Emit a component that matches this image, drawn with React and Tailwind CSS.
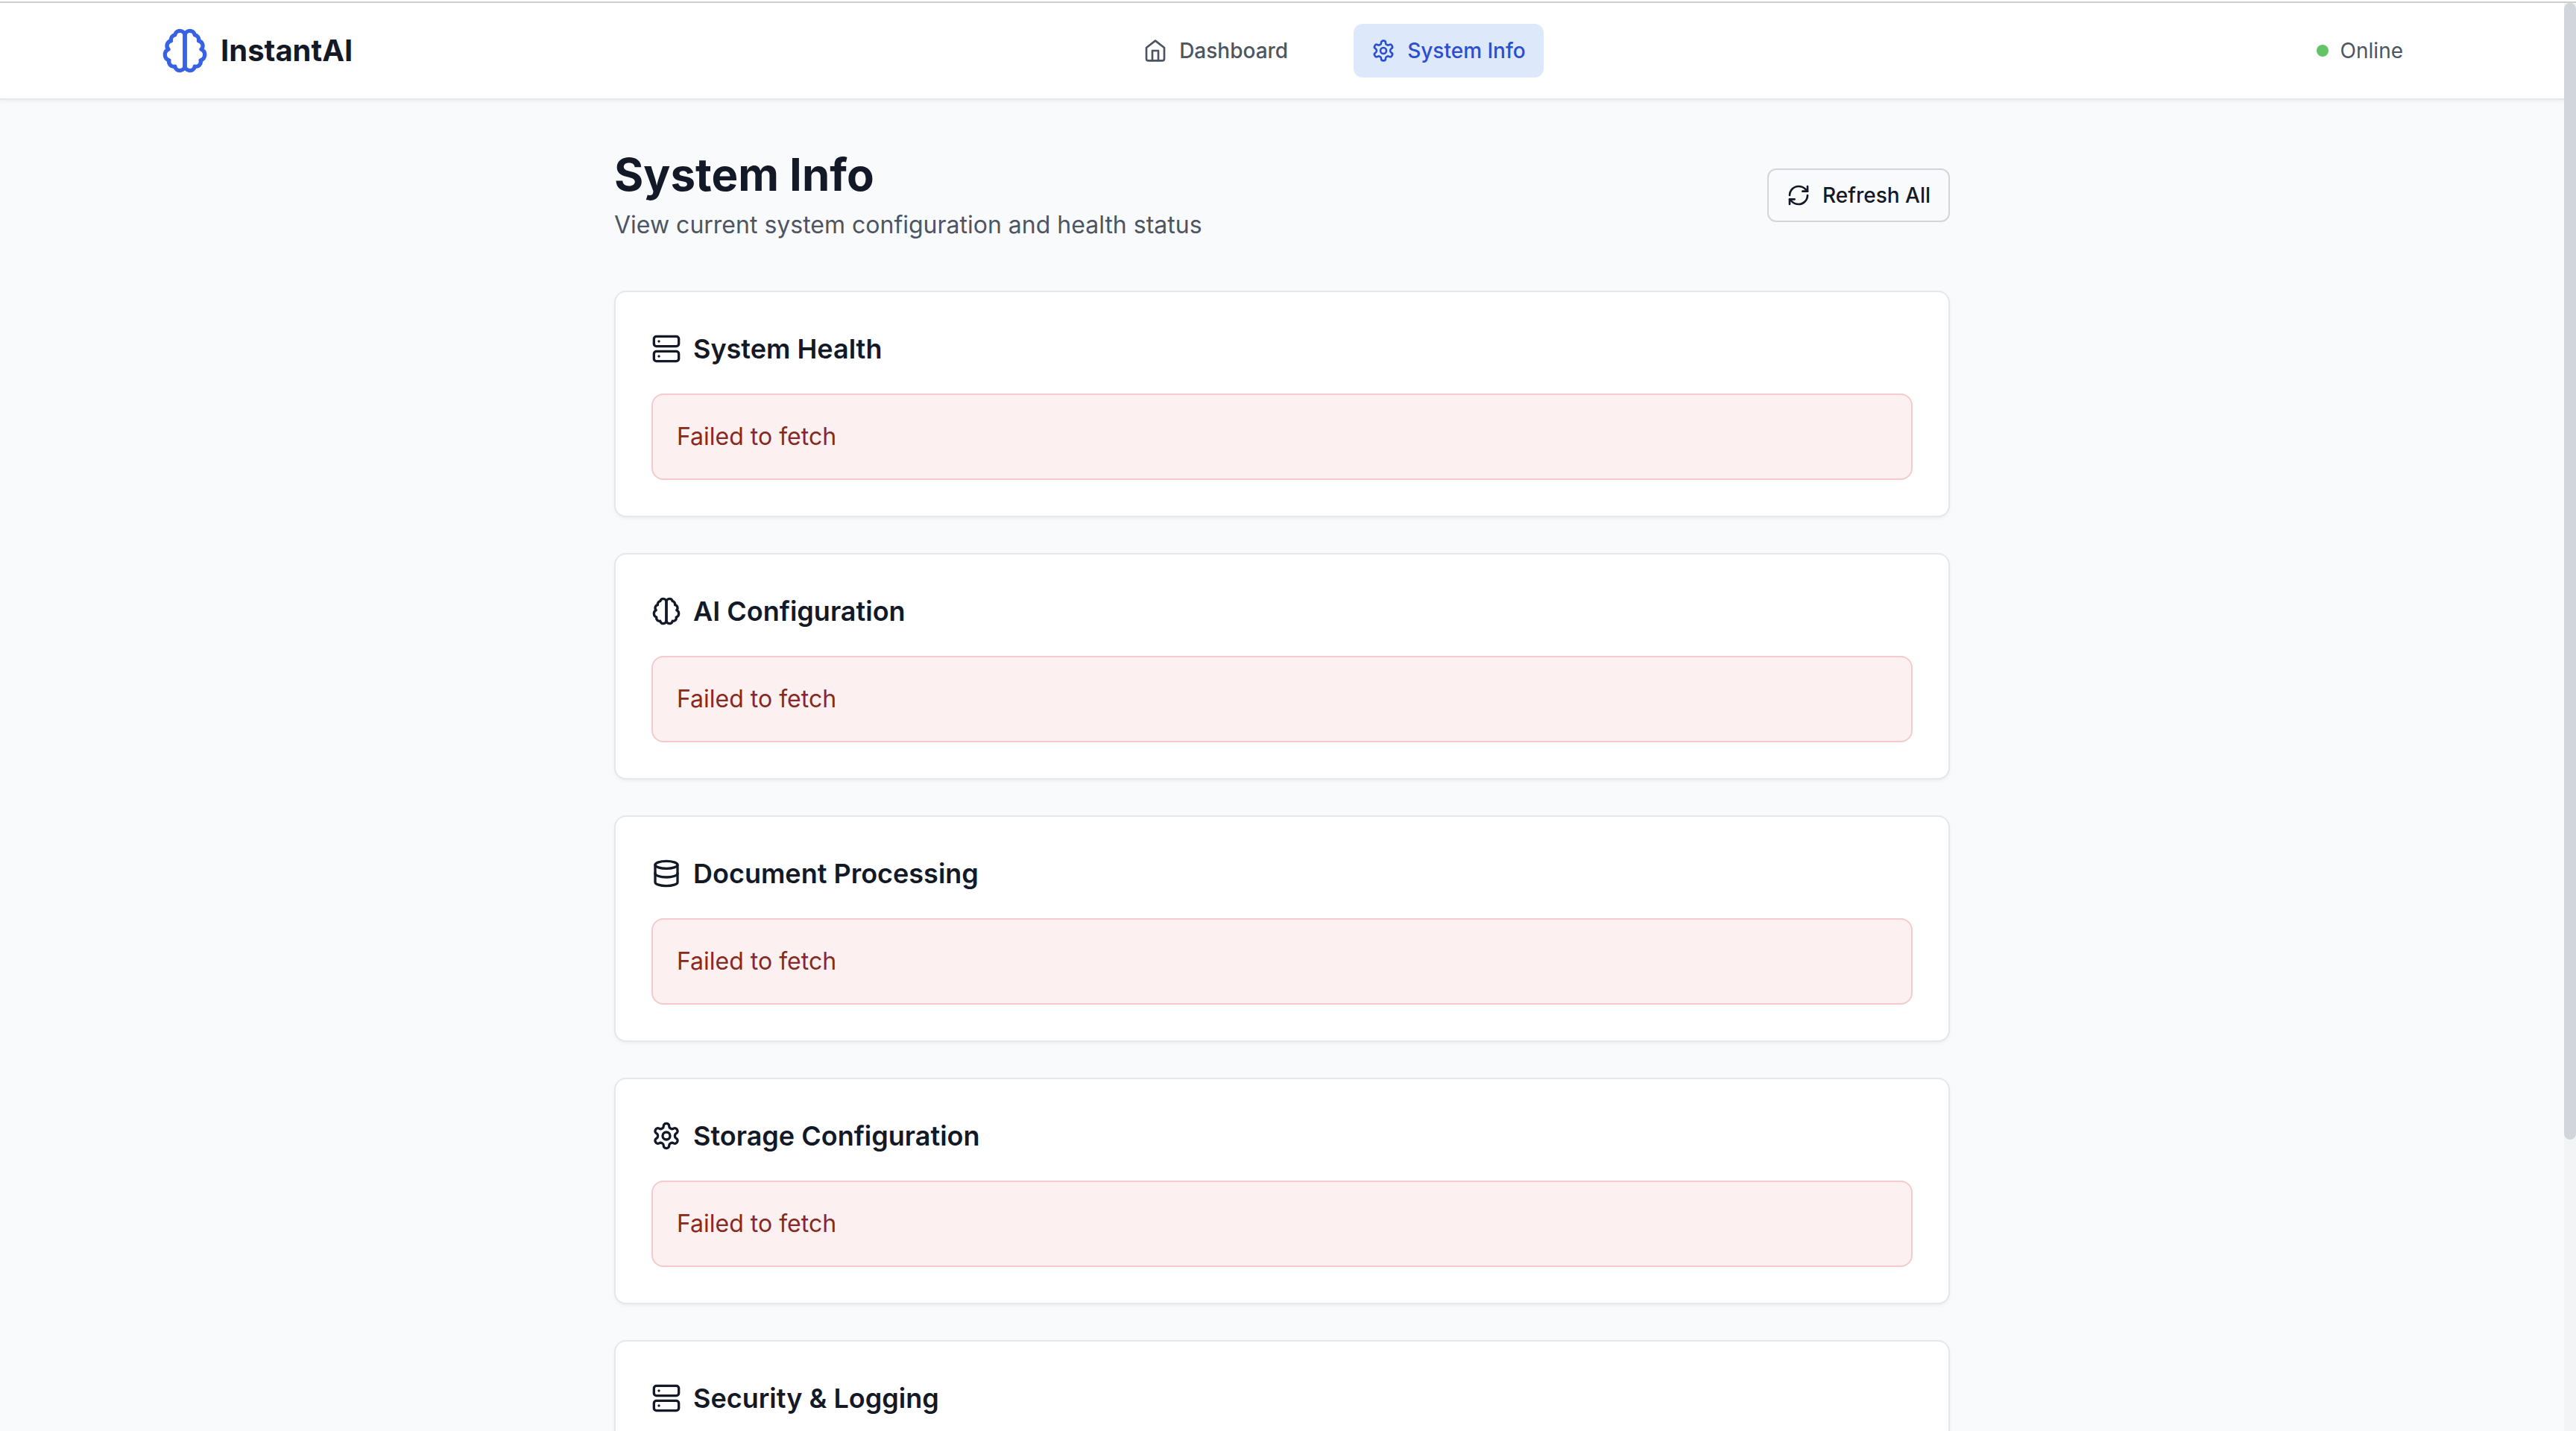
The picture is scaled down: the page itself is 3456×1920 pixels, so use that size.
import { RefreshCw, Server, Database } from "lucide-react";

function BrainIcon({ className }) {
  return (
    <svg
      className={className}
      viewBox="0 0 24 24"
      fill="none"
      stroke="currentColor"
      strokeWidth="2"
      strokeLinecap="round"
      strokeLinejoin="round"
      aria-hidden="true"
    >
      <path d="M9.5 2A2.5 2.5 0 0 1 12 4.5v15a2.5 2.5 0 0 1-4.96.44 2.5 2.5 0 0 1-2.96-3.08 3 3 0 0 1-.34-5.58 2.5 2.5 0 0 1 1.32-4.24 2.5 2.5 0 0 1 1.98-3A2.5 2.5 0 0 1 9.5 2Z" />
      <path d="M14.5 2A2.5 2.5 0 0 0 12 4.5v15a2.5 2.5 0 0 0 4.96.44 2.5 2.5 0 0 0 2.96-3.08 3 3 0 0 0 .34-5.58 2.5 2.5 0 0 0-1.32-4.24 2.5 2.5 0 0 0-1.98-3A2.5 2.5 0 0 0 14.5 2Z" />
    </svg>
  );
}

function HomeIcon({ className }) {
  return (
    <svg
      className={className}
      viewBox="0 0 24 24"
      fill="none"
      stroke="currentColor"
      strokeWidth="2"
      strokeLinecap="round"
      strokeLinejoin="round"
      aria-hidden="true"
    >
      <path d="m3 9 9-7 9 7v11a2 2 0 0 1-2 2H5a2 2 0 0 1-2-2z" />
      <polyline points="9 22 9 12 15 12 15 22" />
    </svg>
  );
}

function SettingsIcon({ className }) {
  return (
    <svg
      className={className}
      viewBox="0 0 24 24"
      fill="none"
      stroke="currentColor"
      strokeWidth="2"
      strokeLinecap="round"
      strokeLinejoin="round"
      aria-hidden="true"
    >
      <path d="M12.22 2h-.44a2 2 0 0 0-2 2v.18a2 2 0 0 1-1 1.73l-.43.25a2 2 0 0 1-2 0l-.15-.08a2 2 0 0 0-2.73.73l-.22.38a2 2 0 0 0 .73 2.73l.15.1a2 2 0 0 1 1 1.72v.51a2 2 0 0 1-1 1.74l-.15.09a2 2 0 0 0-.73 2.73l.22.38a2 2 0 0 0 2.73.73l.15-.08a2 2 0 0 1 2 0l.43.25a2 2 0 0 1 1 1.73V20a2 2 0 0 0 2 2h.44a2 2 0 0 0 2-2v-.18a2 2 0 0 1 1-1.73l.43-.25a2 2 0 0 1 2 0l.15.08a2 2 0 0 0 2.73-.73l.22-.39a2 2 0 0 0-.73-2.73l-.15-.08a2 2 0 0 1-1-1.74v-.5a2 2 0 0 1 1-1.74l.15-.09a2 2 0 0 0 .73-2.73l-.22-.38a2 2 0 0 0-2.73-.73l-.15.08a2 2 0 0 1-2 0l-.43-.25a2 2 0 0 1-1-1.73V4a2 2 0 0 0-2-2z" />
      <circle cx="12" cy="12" r="3" />
    </svg>
  );
}

const sections = [
  { title: "System Health", Icon: Server, error: "Failed to fetch" },
  { title: "AI Configuration", Icon: BrainIcon, error: "Failed to fetch" },
  { title: "Document Processing", Icon: Database, error: "Failed to fetch" },
  { title: "Storage Configuration", Icon: SettingsIcon, error: "Failed to fetch" },
  { title: "Security & Logging", Icon: Server },
];

function Header() {
  return (
    <header className="border-b-2 border-[#e5e7eb] bg-white shadow-[0_2px_4px_rgba(0,0,0,0.05)]">
      <div className="mx-auto flex h-32 max-w-[3072px] items-center justify-between px-8">
        <a href="#" className="flex items-center gap-4">
          <BrainIcon className="size-16 text-[#3662e3]" />
          <span className="text-[40px] leading-[56px] font-bold">InstantAI</span>
        </a>
        <nav className="flex gap-16 text-[28px] leading-10 font-medium">
          <a href="#dashboard" className="flex items-center gap-4 rounded-xl px-6 py-4 text-[#4d5562]">
            <HomeIcon className="size-8" />
            Dashboard
          </a>
          <a
            href="#system"
            aria-current="page"
            className="flex items-center gap-4 rounded-xl bg-[#dee8fb] px-6 py-4 text-[#2b4fd0]"
          >
            <SettingsIcon className="size-8" />
            System Info
          </a>
        </nav>
        <div className="flex items-center gap-4 text-[28px] leading-10 text-[#4d5562]">
          <span className="size-4 rounded-full bg-[#62c466]" />
          Online
        </div>
      </div>
    </header>
  );
}

function Section({ title, Icon, error }) {
  return (
    <section className="rounded-2xl border-2 border-[#e5e7eb] bg-white p-12 shadow-[0_2px_4px_rgba(0,0,0,0.05)]">
      <h2 className="mb-8 flex items-center gap-4 text-[36px] leading-[56px] font-semibold">
        <Icon className="size-10" />
        {title}
      </h2>
      {error && (
        <div role="alert" className="rounded-2xl border-2 border-[#f5caca] bg-[#fcf1f0] p-8 text-[#8a2822]">
          <p>{error}</p>
        </div>
      )}
    </section>
  );
}

export default function App() {
  return (
    <div className="flex h-screen flex-col overflow-hidden bg-[#f9fafc] font-['Inter',sans-serif] text-[32px] leading-[48px] text-[#131926] antialiased">
      <div className="h-1 shrink-0 border-b-2 border-[#cdcdcd] bg-white" />
      <div className="flex min-h-0 flex-1">
        <div className="min-w-0 flex-1 overflow-hidden">
          <Header />
          <main className="mx-auto max-w-[1792px] py-16">
            <div className="mb-16 flex items-center justify-between">
              <div>
                <h1 className="mb-2 text-[60px] leading-[72px] font-bold">System Info</h1>
                <p className="text-[#4d5562]">View current system configuration and health status</p>
              </div>
              <button
                type="button"
                className="flex items-center gap-4 rounded-xl border-2 border-[#d2d5db] px-6 py-[14px] text-[28px] leading-10 font-medium"
              >
                <RefreshCw className="size-8" />
                Refresh All
              </button>
            </div>
            <div className="flex flex-col gap-12">
              {sections.map((s) => (
                <Section key={s.title} {...s} />
              ))}
            </div>
          </main>
        </div>
        <div className="flex w-4 shrink-0 flex-col bg-[#f3f4f6]">
          <div className="grow-[39] rounded-full bg-[#d2d5db]" />
          <div className="grow-[10]" />
        </div>
      </div>
    </div>
  );
}
